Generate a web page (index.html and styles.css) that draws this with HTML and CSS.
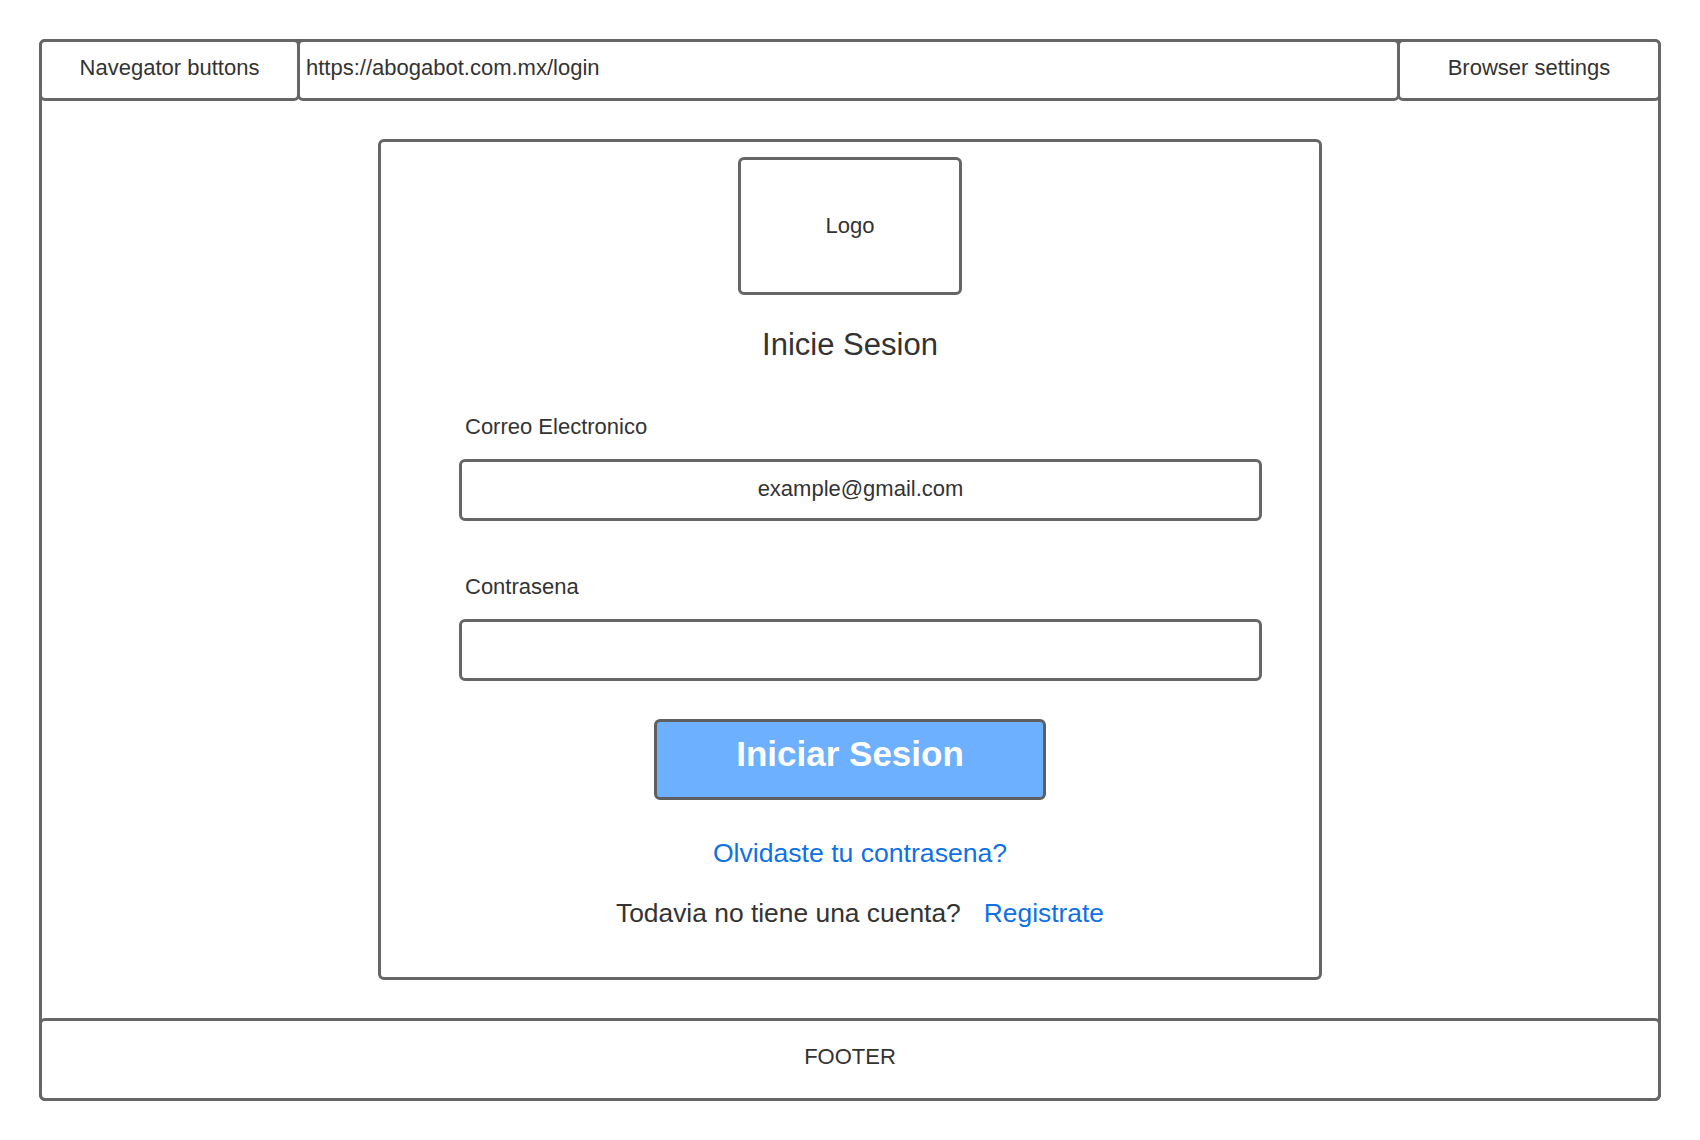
FILE: index.html
```html
<!DOCTYPE html>
<html lang="es">
<head>
<meta charset="utf-8">
<title>Login</title>
<link rel="stylesheet" href="styles.css">
</head>
<body>
<div class="frame">
  <div class="topbar">
    <div class="tb nav">Navegator buttons</div>
    <div class="tb url">https://abogabot.com.mx/login</div>
    <div class="tb settings">Browser settings</div>
  </div>
  <div class="main">
    <div class="card">
      <div class="logo">Logo</div>
      <div class="title">Inicie Sesion</div>
      <div class="form">
        <div class="label first">Correo Electronico</div>
        <div class="input">example@gmail.com</div>
        <div class="label second">Contrasena</div>
        <div class="input"></div>
      </div>
      <div class="button">Iniciar Sesion</div>
      <div class="forgot"><span class="link">Olvidaste tu contrasena?</span></div>
      <div class="register"><span>Todavia no tiene una cuenta?</span><span class="link reg">Registrate</span></div>
    </div>
  </div>
  <div class="footer">FOOTER</div>
</div>
</body>
</html>
```

FILE: styles.css
```css
body {
  margin: 0;
  background: #ffffff;
  font-family: "Liberation Sans", Arial, sans-serif;
  color: #333333;
}

.frame {
  box-sizing: border-box;
  margin: 39px 0 0 39px;
  width: 1622px;
  height: 1062px;
  border: 3px solid #666666;
  border-radius: 6px;
  display: flex;
  flex-direction: column;
}

.topbar {
  display: flex;
  margin: -3px -3px 0;
  height: 62px;
}

.tb {
  box-sizing: border-box;
  border: 3px solid #666666;
  border-radius: 6px;
  display: flex;
  align-items: center;
  font-size: 22px;
  padding-bottom: 5px;
  background: #fff;
}

.nav {
  width: 261px;
  justify-content: center;
}

.url {
  flex: 1;
  margin-left: -3px;
  padding-left: 6px;
}

.settings {
  width: 264px;
  margin-left: -3px;
  justify-content: center;
}

.main {
  flex: 1;
  padding-top: 38px;
}

.card {
  box-sizing: border-box;
  width: 944px;
  height: 841px;
  margin: 0 auto;
  border: 3px solid #666666;
  border-radius: 6px;
  padding-top: 15px;
  display: flex;
  flex-direction: column;
  align-items: center;
}

.logo {
  box-sizing: border-box;
  width: 224px;
  height: 138px;
  border: 3px solid #666666;
  border-radius: 6px;
  display: flex;
  align-items: center;
  justify-content: center;
  font-size: 22px;
}

.title {
  margin-top: 32px;
  font-size: 31px;
  line-height: 36px;
}

.form {
  align-self: flex-start;
  margin-left: 78px;
  width: 803px;
}

.label {
  font-size: 22px;
  line-height: 26px;
  padding-left: 6px;
  margin-bottom: 19px;
}

.label.first {
  margin-top: 51px;
}

.label.second {
  margin-top: 53px;
}

.input {
  box-sizing: border-box;
  height: 62px;
  border: 3px solid #666666;
  border-radius: 6px;
  display: flex;
  align-items: center;
  justify-content: center;
  padding-bottom: 2px;
  font-size: 22px;
}

.button {
  box-sizing: border-box;
  margin-top: 38px;
  width: 392px;
  height: 81px;
  background: #6cb0ff;
  border: 3px solid #5f5f5f;
  border-radius: 6px;
  display: flex;
  align-items: center;
  justify-content: center;
  padding-bottom: 12px;
  color: #ffffff;
  font-weight: bold;
  font-size: 35px;
}

.link {
  color: #1071e5;
}

.forgot {
  margin-top: 37px;
  margin-left: 20px;
  font-size: 26.6px;
  line-height: 32px;
}

.register {
  margin-top: 28px;
  margin-left: 20px;
  font-size: 26.4px;
  line-height: 32px;
  display: flex;
}

.reg {
  margin-left: 23px;
}

.footer {
  box-sizing: border-box;
  height: 83px;
  margin: 0 -3px -3px;
  border: 3px solid #666666;
  border-radius: 6px;
  display: flex;
  align-items: center;
  justify-content: center;
  padding-bottom: 5px;
  font-size: 22px;
}
```
